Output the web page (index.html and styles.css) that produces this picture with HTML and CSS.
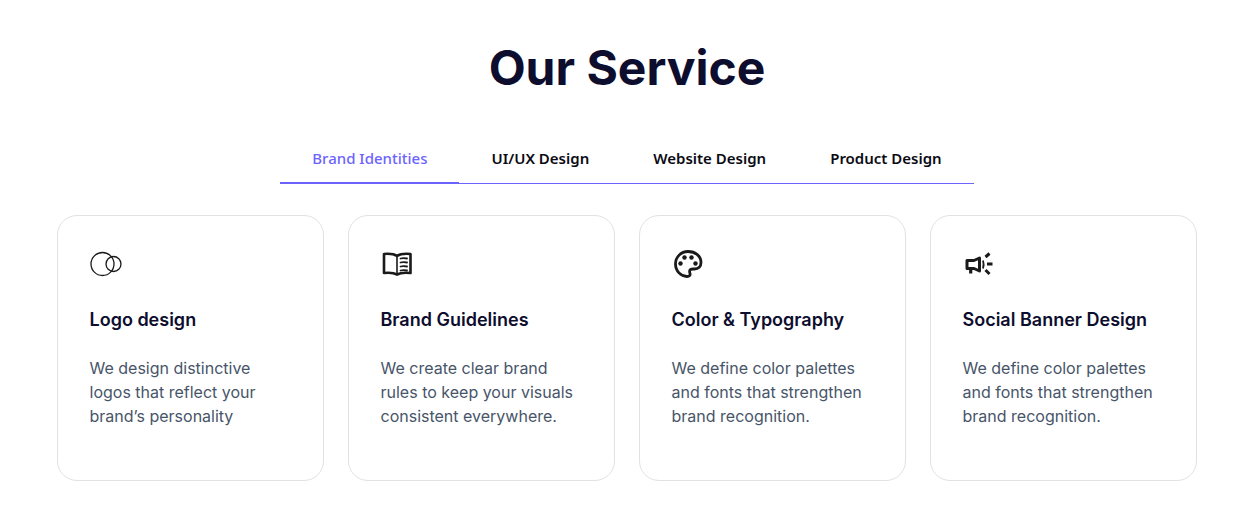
FILE: index.html
```html
<!doctype html>
<html lang="en">
<head>
  <meta charset="utf-8">
  <title>Our Service</title>
  <link rel="stylesheet" href="styles.css">
</head>
<body>
<section class="services">
  <h1>Our Service</h1>

  <nav class="tabs">
    <a class="tab active" href="#">Brand Identities</a>
    <a class="tab" href="#">UI/UX Design</a>
    <a class="tab" href="#">Website Design</a>
    <a class="tab" href="#">Product Design</a>
  </nav>

  <div class="cards">
    <article class="card">
      <svg class="icon" viewBox="0 0 32 32" fill="none" stroke="#1a1a1a" stroke-width="1.3">
        <circle cx="12.5" cy="16" r="11.5"/>
        <circle cx="23.5" cy="16" r="7.5"/>
      </svg>
      <h3>Logo design</h3>
      <p>We design distinctive logos that reflect your brand’s personality</p>
    </article>

    <article class="card">
      <svg class="icon" viewBox="0 0 32 32" fill="none" stroke="#1a1a1a" stroke-width="2.6" stroke-linejoin="round" stroke-linecap="round">
        <path d="M16 8C13 6 8 5.5 3 6V25C8 24.5 13 24.8 16 26.5C19 24.8 24.5 24.5 29.5 25V6C24.5 5.5 19 6 16 8Z"/>
        <path d="M16 8V26.5" stroke-width="1.6"/>
        <path d="M19.5 10.5C21.5 10 23.5 10 26 10.5M19.5 14.5C21.5 14 23.5 14 26 14.5M19.5 18.5C21.5 18 23.5 18 26 18.5M19.5 22.5C21.5 22 23.5 22 26 22.5" stroke-width="1.8"/>
      </svg>
      <h3>Brand Guidelines</h3>
      <p>We create clear brand rules to keep your visuals consistent everywhere.</p>
    </article>

    <article class="card">
      <svg class="icon" viewBox="0 0 32 32" fill="none" stroke="#1a1a1a" stroke-width="2.8">
        <path d="M16 3.5C9 3.5 3.5 9 3.5 16C3.5 23 9 28.5 15 28.5C17.5 28.5 18.5 27 18 25.5C17.5 24 17 22.5 18.5 21.5C19.5 20.8 21 21 22.5 21C26.5 21 29 18.5 29 14.5C29 8 23.5 3.5 16 3.5Z"/>
        <g fill="#1a1a1a" stroke="none">
          <circle cx="8.5" cy="15.5" r="2.2"/>
          <circle cx="12.5" cy="9.5" r="2.2"/>
          <circle cx="19.5" cy="9.5" r="2.2"/>
          <circle cx="23.5" cy="15.5" r="2.2"/>
        </g>
      </svg>
      <h3>Color &amp; Typography</h3>
      <p>We define color palettes and fonts that strengthen brand recognition.</p>
    </article>

    <article class="card">
      <svg class="icon" viewBox="0 0 32 32" fill="none" stroke="#1a1a1a" stroke-width="3" stroke-linejoin="round">
        <path d="M4 12.5H11L16.5 10V23L11 20.5H4Z"/>
        <path d="M7.7 20.5V25.5" stroke-width="3.2"/>
        <path d="M20 12.5C20.8 15 20.8 18 20 20.5" stroke-width="1.8"/>
        <path d="M22.5 9L26.5 5.5M24 16H29.5M22.5 22L26.5 26"/>
      </svg>
      <h3>Social Banner Design</h3>
      <p>We define color palettes and fonts that strengthen brand recognition.</p>
    </article>
  </div>
</section>
</body>
</html>
```

FILE: styles.css
```css
* {
  box-sizing: border-box;
  margin: 0;
  padding: 0;
}
body {
  background: #fff;
  font-family: 'Inter', sans-serif;
}
.services {
  display: flex;
  flex-direction: column;
  align-items: center;
  padding: 39px 50px 48px 57px;
}
h1 {
  font-size: 48px;
  line-height: 58px;
  font-weight: 700;
  color: #0d0d2e;
  margin-bottom: 49px;
}
.tabs {
  display: flex;
  border-bottom: 1px solid #6c63ff;
  margin-bottom: 31px;
}
.tab {
  padding: 0 32px 12px;
  font-family: 'Noto Sans', sans-serif;
  font-size: 15px;
  line-height: 24px;
  font-weight: 600;
  color: #0b0b14;
  text-decoration: none;
  margin-bottom: -1px;
}
.tab.active {
  font-weight: 500;
  color: #6c63ff;
  border-bottom: 2px solid #6c63ff;
}
.cards {
  display: grid;
  grid-template-columns: repeat(4, 1fr);
  gap: 24px;
  width: 100%;
}
.card {
  height: 266px;
  padding: 32px 31.5px;
  border: 1px solid #e2e2e2;
  border-radius: 20px;
}
.icon {
  display: block;
  width: 32px;
  height: 32px;
  margin-bottom: 26px;
}
h3 {
  font-size: 18px;
  line-height: 28px;
  font-weight: 600;
  color: #0d0d2e;
  margin-bottom: 22px;
}
.card p {
  font-size: 16px;
  line-height: 24px;
  color: #475569;
}
```
